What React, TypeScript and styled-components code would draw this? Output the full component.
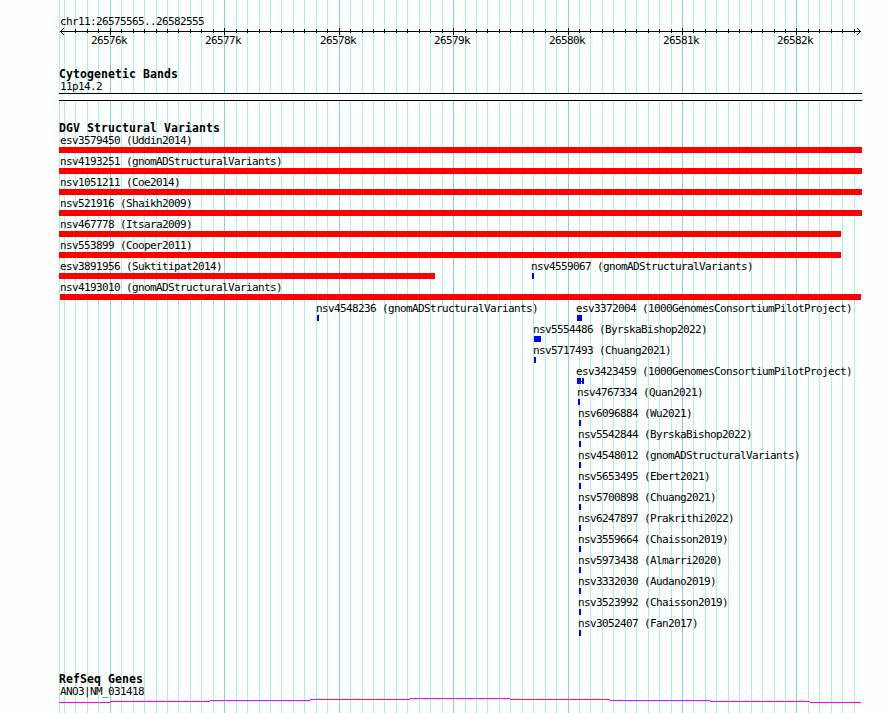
import React from "react";
import styled, { createGlobalStyle } from "styled-components";

const START = 26575565;
const END = 26582555;
const LEFT = 60;
const SCALE = 800 / (END - START);

const toX = (pos: number) => Math.round(LEFT + (pos - START) * SCALE);

const minorTicks: number[] = [];
const majorTicks: number[] = [];
for (let pos = 26575600; pos < END; pos += 100) {
    (pos % 1000 === 0 ? majorTicks : minorTicks).push(pos);
}

const RED = "#ff0000";
const BLUE = "#0000ff";

type Block = { width: number; color: string; link?: boolean };
type Variant = { label: string; x: number; labelX: number; blocks: Block[] };

const loss = (label: string, x: number, end: number): Variant => ({
    label,
    x,
    labelX: 60,
    blocks: [{ width: end - x, color: RED }],
});
const gain = (label: string, x: number, width = 2): Variant => ({
    label,
    x,
    labelX: x - 1,
    blocks: [{ width, color: BLUE }],
});

const rows: Variant[][] = [
    [loss("esv3579450 (Uddin2014)", 59, 862)],
    [loss("nsv4193251 (gnomADStructuralVariants)", 59, 862)],
    [loss("nsv1051211 (Coe2014)", 59, 862)],
    [loss("nsv521916 (Shaikh2009)", 59, 862)],
    [loss("nsv467778 (Itsara2009)", 59, 841)],
    [loss("nsv553899 (Cooper2011)", 59, 841)],
    [loss("esv3891956 (Suktitipat2014)", 59, 435), gain("nsv4559067 (gnomADStructuralVariants)", 532)],
    [loss("nsv4193010 (gnomADStructuralVariants)", 60, 861)],
    [
        gain("nsv4548236 (gnomADStructuralVariants)", 317),
        gain("esv3372004 (1000GenomesConsortiumPilotProject)", 577, 5),
    ],
    [gain("nsv5554486 (ByrskaBishop2022)", 534, 7)],
    [gain("nsv5717493 (Chuang2021)", 534)],
    [
        {
            label: "esv3423459 (1000GenomesConsortiumPilotProject)",
            x: 577,
            labelX: 576,
            blocks: [
                { width: 4, color: BLUE },
                { width: 1, color: BLUE, link: true },
                { width: 2, color: BLUE },
            ],
        },
    ],
    [gain("nsv4767334 (Quan2021)", 578)],
    [gain("nsv6096884 (Wu2021)", 579)],
    [gain("nsv5542844 (ByrskaBishop2022)", 579)],
    [gain("nsv4548012 (gnomADStructuralVariants)", 579)],
    [gain("nsv5653495 (Ebert2021)", 579)],
    [gain("nsv5700898 (Chuang2021)", 579)],
    [gain("nsv6247897 (Prakrithi2022)", 579)],
    [gain("nsv3559664 (Chaisson2019)", 579)],
    [gain("nsv5973438 (Almarri2020)", 579)],
    [gain("nsv3332030 (Audano2019)", 579)],
    [gain("nsv3523992 (Chaisson2019)", 579)],
    [gain("nsv3052407 (Fan2017)", 579)],
];

const GlobalStyle = createGlobalStyle`
    body {
        margin: 0;
        background: #fdfffc;
    }
`;
const Page = styled.div`
    position: relative;
    width: 890px;
    height: 713px;
    overflow: hidden;
    background: #fdfffc;
    color: #000;
    font-family: "DejaVu Sans Mono", monospace;
    font-size: 11px;
    letter-spacing: -0.622px;
    line-height: 13px;
`;
const GridLines = styled.svg`
    position: absolute;
    top: 0;
    left: 0;
`;
const Tracks = styled.div`
    position: relative;
    display: flex;
    flex-direction: column;
`;
const Axis = styled.svg`
    display: block;
    height: 53px;
`;
const Track = styled.section<{ $height: number }>`
    height: ${(p) => p.$height}px;
    padding-top: 15px;
`;
const Title = styled.h2`
    margin: 0 0 -1px 59px;
    font-size: 11.5px;
    line-height: 13px;
    font-weight: bold;
    letter-spacing: 0.077px;
`;
const Label = styled.div<{ $x: number }>`
    height: 13px;
    margin-left: ${(p) => p.$x}px;
    white-space: pre;
`;
const Band = styled.div`
    width: 803px;
    height: 6px;
    margin-left: 59px;
    border-top: 1px solid #000;
    border-bottom: 1px solid #000;
    background: #fdfffc;
`;
const Row = styled.div`
    display: grid;
    height: 21px;
`;
const Feature = styled.div`
    grid-area: 1 / 1;
`;
const Glyph = styled.div<{ $x: number }>`
    display: flex;
    align-items: center;
    height: 6px;
    margin-left: ${(p) => p.$x}px;
`;
const Bar = styled.div<{ $width: number; $color: string; $link?: boolean }>`
    width: ${(p) => p.$width}px;
    height: ${(p) => (p.$link ? 1 : 6)}px;
    background: ${(p) => p.$color};
`;
const GeneLine = styled.svg`
    display: block;
`;

const Ruler = () => (
    <Axis width={890} height={53}>
        <text x={60} y={25}>
            chr11:26575565..26582555
        </text>
        <g shapeRendering="crispEdges">
            <rect x={60} y={31} width={801} height={1} />
            {/* the first tick would run into the arrow head */}
            {minorTicks.slice(1).map((pos) => (
                <rect key={pos} x={toX(pos)} y={29} width={1} height={4} />
            ))}
            {majorTicks.map((pos) => (
                <rect key={pos} x={toX(pos)} y={28} width={1} height={7} />
            ))}
            {[1, 2, 3].map((d) => (
                <React.Fragment key={d}>
                    <rect x={60 + d} y={31 - d} width={1} height={1} />
                    <rect x={60 + d} y={31 + d} width={1} height={1} />
                    <rect x={860 - d} y={31 - d} width={1} height={1} />
                    <rect x={860 - d} y={31 + d} width={1} height={1} />
                </React.Fragment>
            ))}
        </g>
        {majorTicks.map((pos) => (
            <text key={pos} x={toX(pos) - 19} y={44}>
                {pos / 1000}k
            </text>
        ))}
    </Axis>
);

export default function App() {
    return (
        <>
            <GlobalStyle />
            <Page>
                <GridLines width={890} height={713} shapeRendering="crispEdges">
                    <rect x={59} y={0} width={1} height={713} fill="#afeeee" />
                    {minorTicks.map((pos) => (
                        <rect key={pos} x={toX(pos)} y={0} width={1} height={713} fill="#afeeee" />
                    ))}
                    {majorTicks.map((pos) => (
                        <rect key={pos} x={toX(pos)} y={0} width={1} height={713} fill="#87ceeb" />
                    ))}
                </GridLines>
                <Tracks>
                    <Ruler />
                    <Track $height={39}>
                        <Title>Cytogenetic Bands</Title>
                        <Label $x={60}>11p14.2</Label>
                        <Band />
                    </Track>
                    <Track $height={536}>
                        <Title>DGV Structural Variants</Title>
                        {rows.map((row, i) => (
                            <Row key={i}>
                                {row.map((v) => (
                                    <Feature key={v.label}>
                                        <Label $x={v.labelX}>{v.label}</Label>
                                        <Glyph $x={v.x}>
                                            {v.blocks.map((b, j) => (
                                                <Bar key={j} $width={b.width} $color={b.color} $link={b.link} />
                                            ))}
                                        </Glyph>
                                    </Feature>
                                ))}
                            </Row>
                        ))}
                    </Track>
                    <Track $height={40}>
                        <Title>RefSeq Genes</Title>
                        <Label $x={60}>ANO3|NM_031418</Label>
                        <GeneLine width={890} height={12} shapeRendering="crispEdges">
                            <g fill="#ff00ff">
                                <rect x={59} y={4} width={51} height={1} />
                                <rect x={110} y={3} width={100} height={1} />
                                <rect x={210} y={2} width={100} height={1} />
                                <rect x={310} y={1} width={100} height={1} />
                                <rect x={410} y={0} width={100} height={1} />
                                <rect x={510} y={1} width={100} height={1} />
                                <rect x={610} y={2} width={100} height={1} />
                                <rect x={710} y={3} width={100} height={1} />
                                <rect x={810} y={4} width={51} height={1} />
                            </g>
                        </GeneLine>
                    </Track>
                </Tracks>
            </Page>
        </>
    );
}
